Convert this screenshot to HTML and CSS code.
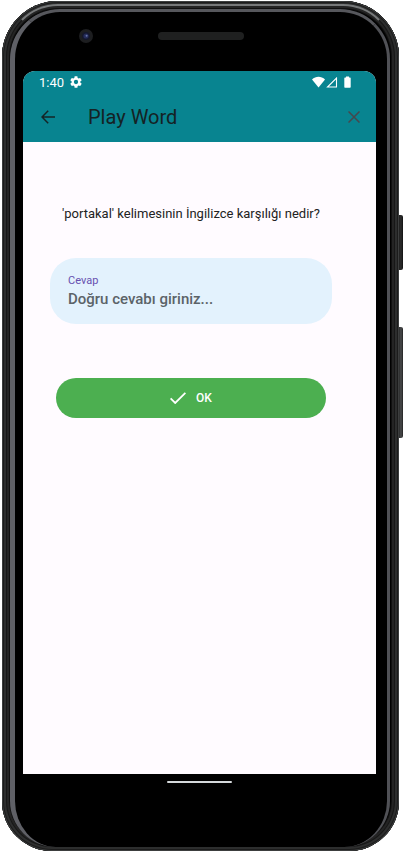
FILE: index.html
```html
<!DOCTYPE html>
<html lang="tr">
<head>
  <meta charset="utf-8">
  <meta name="viewport" content="width=device-width, initial-scale=1">
  <title>Play Word</title>
  <link rel="stylesheet" href="styles.css">
</head>
<body>
  <div class="phone">
    <span class="side-key side-key-power"></span>
    <span class="side-key side-key-volume"></span>
    <div class="bezel">
      <div class="bezel-top">
        <svg class="camera" viewBox="0 0 14 14" aria-hidden="true">
          <circle cx="7" cy="7" r="7" fill="#1d1e20"/>
          <circle cx="7" cy="7" r="4" fill="#15182c"/>
          <circle cx="7" cy="7" r="2.6" fill="#252c5a"/>
          <circle cx="7.6" cy="6.8" r="1" fill="#6573a8"/>
        </svg>
        <span class="speaker"></span>
      </div>
      <div class="screen">
        <header class="top">
          <div class="status">
            <span class="clock">1:40</span>
            <svg class="gear" viewBox="2 2 20 20" aria-hidden="true"><path fill="#fff" d="M19.14 12.94c.04-.3.06-.61.06-.94s-.02-.64-.07-.94l2.03-1.58a.49.49 0 0 0 .12-.61l-1.92-3.32a.49.49 0 0 0-.59-.22l-2.39.96a7 7 0 0 0-1.62-.94l-.36-2.54A.48.48 0 0 0 13.92 2.4h-3.84a.48.48 0 0 0-.48.41l-.36 2.54c-.59.24-1.13.57-1.62.94l-2.39-.96a.48.48 0 0 0-.59.22L2.74 8.87a.48.48 0 0 0 .12.61l2.03 1.58c-.05.3-.09.63-.09.94s.02.64.07.94l-2.03 1.58a.49.49 0 0 0-.12.61l1.92 3.32c.12.22.37.29.59.22l2.39-.96c.5.38 1.03.7 1.62.94l.36 2.54c.05.24.24.41.48.41h3.84c.24 0 .44-.17.47-.41l.36-2.54a7 7 0 0 0 1.62-.94l2.39.96c.22.08.47 0 .59-.22l1.92-3.32a.48.48 0 0 0-.12-.61zM12 15.6a3.6 3.6 0 1 1 0-7.2 3.6 3.6 0 0 1 0 7.2z"/></svg>
            <svg class="signals" viewBox="0 0 40 12" aria-hidden="true">
              <path fill="#fff" d="M0 3.4C3.6-.2 9.4-.2 13 3.4L6.500 11.500z"/>
              <path fill="none" stroke="#fff" stroke-width="1.100" d="M24.500 2V11H15.500z"/>
              <path fill="#fff" d="M34 .5h3v1h1q.7 0 .7.700v8.900q0 .7-.7.700h-5q-.7 0-.7-.7V2.200q0-.7.700-.7h1z"/>
            </svg>
          </div>
          <div class="app-bar">
            <button class="icon-button" type="button" aria-label="Geri">
              <svg class="arrow" viewBox="0 0 14 14" aria-hidden="true"><path fill="none" stroke="#142426" stroke-width="1.500" d="M14 7H1M7.200.8L1 7l6.200 6.200"/></svg>
            </button>
            <h1 class="title">Play Word</h1>
            <button class="icon-button" type="button" aria-label="Kapat">
              <svg class="close" viewBox="0 0 12 12" aria-hidden="true"><path fill="none" stroke="#46474d" stroke-width="1.500" d="M.5.5l11 11M11.500.5l-11 11"/></svg>
            </button>
          </div>
        </header>
        <main class="content">
          <p class="question">'portakal' kelimesinin İngilizce karşılığı nedir?</p>
          <div class="field">
            <label class="field-label" for="answer">Cevap</label>
            <input class="field-input" id="answer" type="text" placeholder="Doğru cevabı giriniz...">
          </div>
          <button class="ok" type="button">
            <svg class="check" viewBox="0 0 16 12" aria-hidden="true"><path fill="none" stroke="#fff" stroke-width="1.800" d="M.6 6.400L5.200 11 15.400.8"/></svg>
            OK
          </button>
        </main>
      </div>
      <div class="bezel-bottom"><span class="home-bar"></span></div>
    </div>
  </div>
</body>
</html>
```
FILE: styles.css
```css
* {
  box-sizing: border-box;
}

body {
  margin: 0;
  background: #fff;
  font-family: Roboto, "Liberation Sans", sans-serif;
}

.phone {
  position: relative;
  display: flex;
  min-height: 100vh;
  padding: 1px 5px 0 2px;
}

.side-key {
  position: absolute;
  right: 1px;
  width: 5px;
  background: linear-gradient(90deg, #1a1a1a, #2c2c2c 60%, #111);
  border-radius: 0 2px 2px 0;
}

.side-key-power {
  top: 215px;
  height: 55px;
}

.side-key-volume {
  top: 327px;
  height: 111px;
  background: linear-gradient(90deg, #1a1a1a, #4a4c4d 60%, #222);
}

.bezel {
  position: relative;
  flex: 1;
  display: flex;
  flex-direction: column;
  padding: 0 23px 0 21px;
  background: #000;
  border-radius: 56px 56px 50px 50px;
  box-shadow:
    inset 0 0 0 1px #3c3e3e,
    inset 0 0 0 2px #1c1c1c,
    inset 0 0 0 4px #2d2e2e,
    inset 0 0 0 5px #171717,
    inset 0 0 0 7px #242424,
    inset 0 0 0 8px #101010;
}

.bezel::before {
  content: "";
  position: absolute;
  inset: 8px 9px 4px 8px;
  border: solid;
  border-width: 3px 3px 0 5px;
  border-color: #56575c #505156 #000 #5f6066;
  border-radius: 50px 50px 46px 46px;
  background: #000;
}

.bezel::after {
  content: "";
  position: absolute;
  inset: 3px 4px auto 4px;
  height: 60px;
  border: 2px solid transparent;
  border-top-color: #77797a;
  border-radius: 52px 52px 0 0;
}

.bezel-top {
  position: relative;
  display: flex;
  align-items: center;
  height: 70px;
  padding: 0 56px;
}

.camera {
  width: 14px;
  height: 14px;
}

.speaker {
  width: 86px;
  height: 8px;
  margin-left: 65px;
  border-radius: 4px;
  background: #1f2020;
}

.screen {
  position: relative;
  flex: 1;
  display: flex;
  flex-direction: column;
  overflow: hidden;
  border-radius: 12px 12px 0 0;
  background: #fffbff;
}

.top {
  height: 71px;
  background: #088490;
}

.status {
  display: flex;
  align-items: center;
  height: 22px;
  padding: 0 24px 0 16px;
  color: #fff;
  font-size: 13px;
}

.gear {
  width: 12px;
  height: 12px;
  margin-left: 6px;
}

.signals {
  width: 40px;
  height: 12px;
  margin-left: auto;
}

.app-bar {
  display: flex;
  align-items: center;
  height: 48px;
  padding: 0 4px 0 7px;
}

.icon-button {
  display: flex;
  align-items: center;
  justify-content: center;
  width: 36px;
  height: 40px;
  padding: 0;
  border: 0;
  background: none;
}

.arrow {
  width: 14px;
  height: 14px;
}

.close {
  width: 12px;
  height: 12px;
}

.title {
  flex: 1;
  margin: 0 0 0 22px;
  color: #152224;
  font-size: 20px;
  font-weight: 400;
  line-height: 24px;
}

.content {
  display: flex;
  flex-direction: column;
  padding: 64px 44px 0 27px;
}

.question {
  margin: 0;
  color: #222;
  font-size: 13px;
  line-height: 16px;
  text-align: center;
}

.field {
  display: flex;
  flex-direction: column;
  margin-top: 36px;
  padding: 16px 18px 14px;
  border-radius: 26px;
  background: #e3f2fd;
}

.field-label {
  color: #6750b0;
  font-size: 11px;
  line-height: 14px;
}

.field-input {
  width: 100%;
  height: 22px;
  padding: 0;
  border: 0;
  outline: 0;
  background: none;
  color: #222;
  font: 500 15px Roboto, "Liberation Sans", sans-serif;
}

.field-input::placeholder {
  color: #5b6368;
  opacity: 1;
}

.ok {
  display: flex;
  align-items: center;
  justify-content: center;
  gap: 10px;
  height: 40px;
  margin: 54px 6px 0;
  padding: 0;
  border: 0;
  border-radius: 20px;
  background: #4caf50;
  color: #fff;
  font: 500 12px Roboto, "Liberation Sans", sans-serif;
}

.check {
  width: 16px;
  height: 12px;
}

.bezel-bottom {
  position: relative;
  display: flex;
  justify-content: center;
  height: 77px;
  padding-top: 7px;
}

.home-bar {
  width: 65px;
  height: 2px;
  border-radius: 1px;
  background: #d5d9db;
}
```
